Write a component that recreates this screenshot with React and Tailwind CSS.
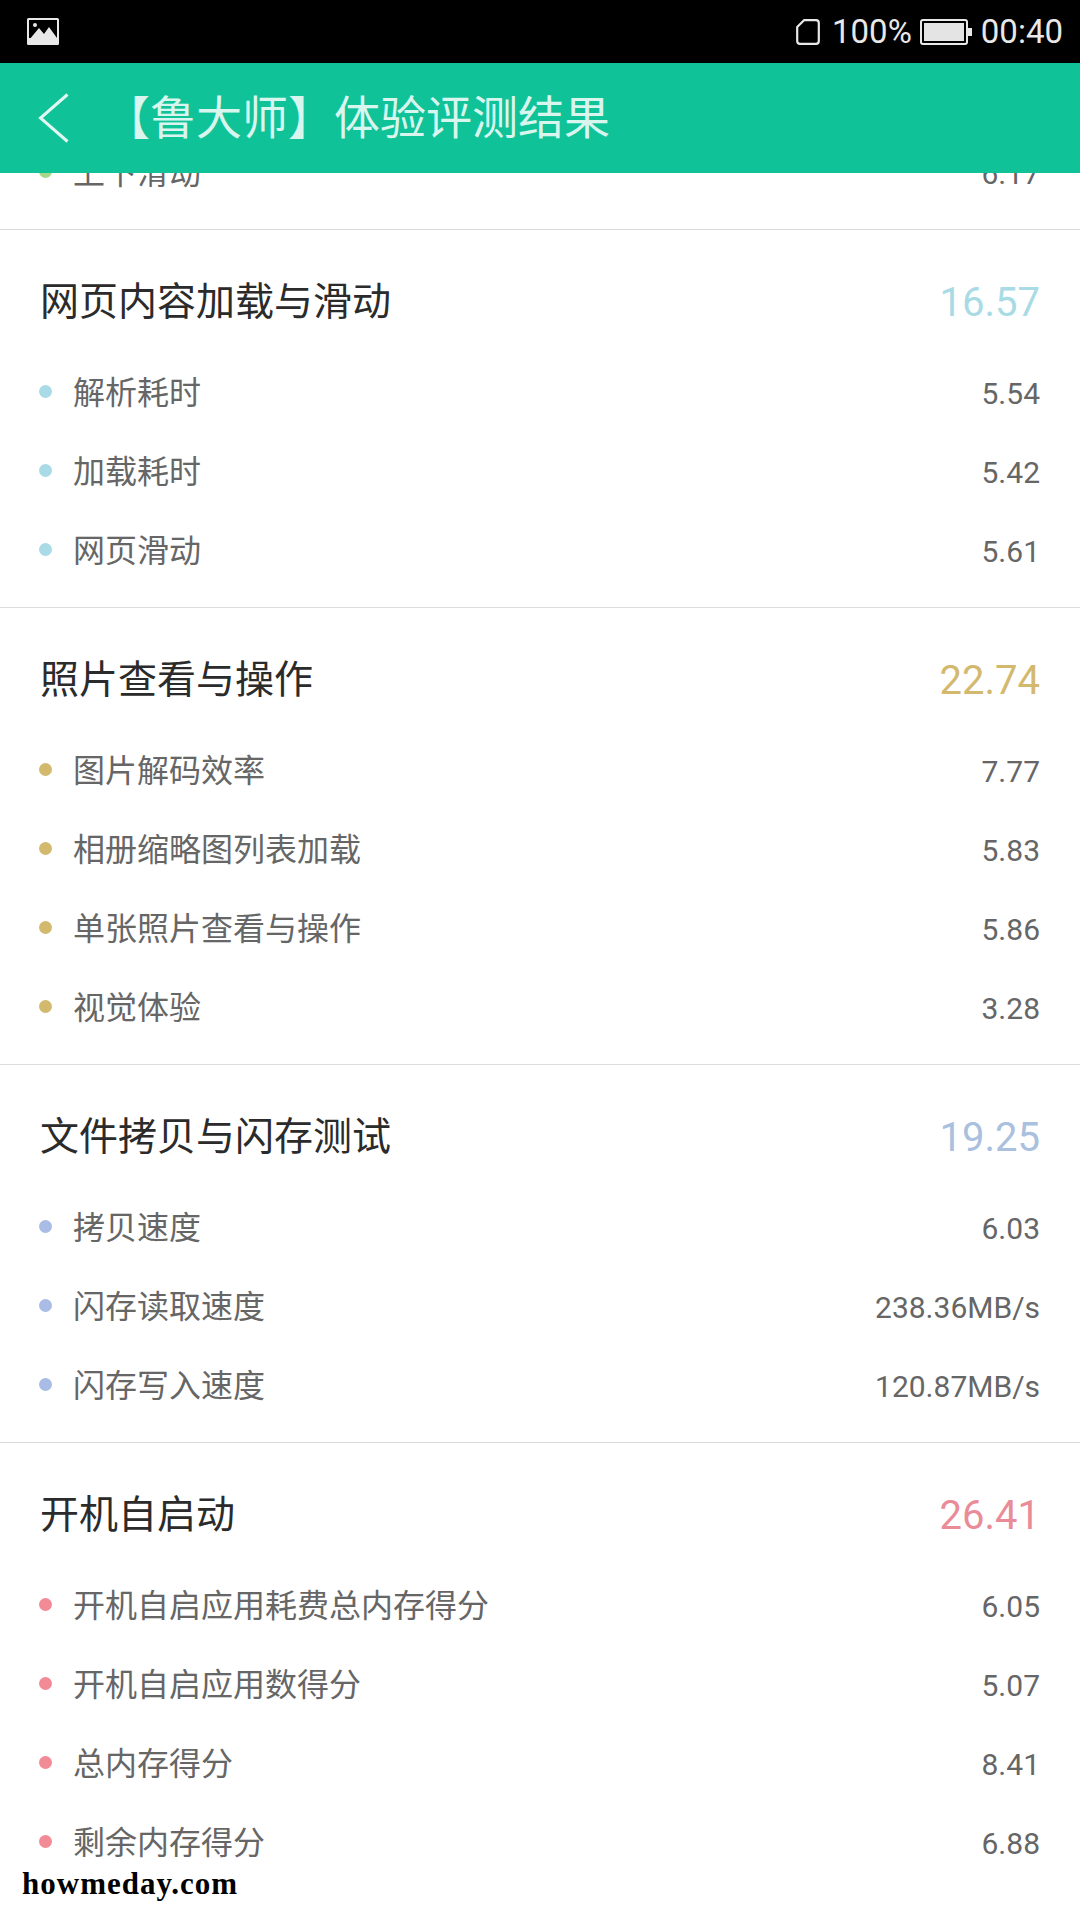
import React from 'react';

const sections = [
  {
    title: '网页内容加载与滑动',
    score: '16.57',
    scoreColor: 'text-[#a9dbe6]',
    dotColor: 'bg-[#a9dbe6]',
    rows: [
      ['解析耗时', '5.54'],
      ['加载耗时', '5.42'],
      ['网页滑动', '5.61'],
    ],
  },
  {
    title: '照片查看与操作',
    score: '22.74',
    scoreColor: 'text-[#d3b96e]',
    dotColor: 'bg-[#d3b96e]',
    rows: [
      ['图片解码效率', '7.77'],
      ['相册缩略图列表加载', '5.83'],
      ['单张照片查看与操作', '5.86'],
      ['视觉体验', '3.28'],
    ],
  },
  {
    title: '文件拷贝与闪存测试',
    score: '19.25',
    scoreColor: 'text-[#a9c0de]',
    dotColor: 'bg-[#a9bce6]',
    rows: [
      ['拷贝速度', '6.03'],
      ['闪存读取速度', '238.36MB/s'],
      ['闪存写入速度', '120.87MB/s'],
    ],
  },
  {
    title: '开机自启动',
    score: '26.41',
    scoreColor: 'text-[#ea8c98]',
    dotColor: 'bg-[#f28b96]',
    rows: [
      ['开机自启应用耗费总内存得分', '6.05'],
      ['开机自启应用数得分', '5.07'],
      ['总内存得分', '8.41'],
      ['剩余内存得分', '6.88'],
    ],
  },
];

function Row({ label, value, dotColor }) {
  return (
    <div className="flex items-center h-[79px] pl-[39px] pr-10">
      <span className={`w-[13px] h-[13px] rounded-full mr-[21px] -mt-[3px] ${dotColor}`} />
      <span className="flex-1 text-[32px] text-[#666666]">{label}</span>
      <span className="text-[30px] text-[#666666]">{value}</span>
    </div>
  );
}

function Section({ section }) {
  return (
    <div className="border-t border-[#dcdcdc] pb-[16px]">
      <div className="flex items-center justify-between h-[110px] pt-[36px] pb-[-1px] pl-10 pr-10 mb-[14px]">
        <span className="text-[39px] text-[#2b2b2b]">{section.title}</span>
        <span className={`text-[40px] ${section.scoreColor}`}>{section.score}</span>
      </div>
      {section.rows.map(([label, value]) => (
        <Row key={label} label={label} value={value} dotColor={section.dotColor} />
      ))}
    </div>
  );
}

export default function App() {
  return (
    <div className="relative w-[1080px] h-[1920px] overflow-hidden bg-white font-['Roboto','Noto_Sans_CJK_SC',sans-serif]">
      {/* Status bar */}
      <div className="flex items-center justify-between h-[63px] bg-black pl-[27px] pr-[17px] text-[#e8e8e8]">
        <svg width="32" height="27" viewBox="0 0 32 27">
          <rect width="32" height="27" rx="1.5" fill="#e8e8e8" />
          <rect x="2" y="2" width="28" height="18" fill="#000" />
          <circle cx="8" cy="7" r="2" fill="#e8e8e8" />
          <path d="M2 22 L12 10 L17 16 L22 9 L30 20 L30 24 L2 24 Z" fill="#e8e8e8" />
        </svg>
        <div className="flex items-center text-[33px] leading-none">
          <svg width="24" height="26" viewBox="0 0 24 26" className="mr-[12px]">
            <path d="M8 1.2 H20 Q22.8 1.2 22.8 4 V22 Q22.8 24.8 20 24.8 H4 Q1.2 24.8 1.2 22 V8 Z" fill="none" stroke="#e8e8e8" strokeWidth="2.2" strokeLinejoin="round" />
          </svg>
          <span>100%</span>
          <svg width="52" height="26" viewBox="0 0 52 26" className="ml-[8px] mr-[9px]">
            <rect x="1" y="1" width="46" height="24" rx="2" fill="none" stroke="#e8e8e8" strokeWidth="2" />
            <rect x="4" y="4" width="40" height="18" fill="#e4e4e4" />
            <rect x="48" y="9" width="4" height="8" fill="#e8e8e8" />
          </svg>
          <span>00:40</span>
        </div>
      </div>

      {/* Title bar */}
      <div className="relative z-10 flex items-center h-[110px] bg-[#10c298] pl-[38px] text-[#d8f6ee]">
        <svg width="32" height="50" viewBox="0 0 32 50" className="mr-[34px]">
          <path d="M29.5 1.5 L2.5 25 L29.5 48.5" fill="none" stroke="#e0f8f2" strokeWidth="3" />
        </svg>
        <span className="text-[46px] leading-none">【鲁大师】体验评测结果</span>
      </div>

      {/* Scrolled list, the first row sits half under the title bar */}
      <div className="-mt-[39.5px]">
        <div className="pb-[16px]">
          <Row label="上下滑动" value="6.17" dotColor="bg-[#a5d98a]" />
        </div>
        {sections.map((section) => (
          <Section key={section.title} section={section} />
        ))}
      </div>

      {/* Watermark */}
      <div className="absolute left-[22px] top-[1868px] text-[31px] leading-none font-bold text-black tracking-[1px] font-['Liberation_Serif',serif]">
        howmeday.com
      </div>
    </div>
  );
}
